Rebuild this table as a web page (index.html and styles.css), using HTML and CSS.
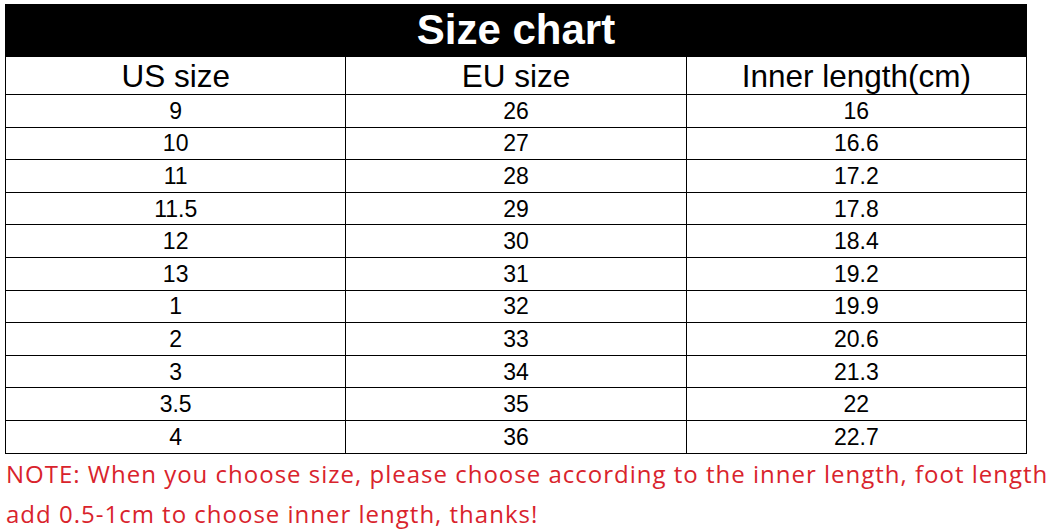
FILE: index.html
```html
<!DOCTYPE html>
<html lang="en">
<head>
<meta charset="utf-8">
<title>Size chart</title>
<link rel="stylesheet" href="styles.css">
</head>
<body>
<div class="chart">
  <div class="chart-title">Size chart</div>
  <table class="size-table">
    <thead>
      <tr><th>US size</th><th>EU size</th><th>Inner length(cm)</th></tr>
    </thead>
    <tbody>
      <tr><td>9</td><td>26</td><td>16</td></tr>
      <tr><td>10</td><td>27</td><td>16.6</td></tr>
      <tr><td>11</td><td>28</td><td>17.2</td></tr>
      <tr><td>11.5</td><td>29</td><td>17.8</td></tr>
      <tr><td>12</td><td>30</td><td>18.4</td></tr>
      <tr><td>13</td><td>31</td><td>19.2</td></tr>
      <tr><td>1</td><td>32</td><td>19.9</td></tr>
      <tr><td>2</td><td>33</td><td>20.6</td></tr>
      <tr><td>3</td><td>34</td><td>21.3</td></tr>
      <tr><td>3.5</td><td>35</td><td>22</td></tr>
      <tr><td>4</td><td>36</td><td>22.7</td></tr>
    </tbody>
  </table>
</div>
<p class="note">NOTE: When you choose size, please choose according to the inner length, foot length<br>add 0.5-1cm to choose inner length, thanks!</p>
</body>
</html>
```

FILE: styles.css
```css
html, body {
  margin: 0;
  padding: 0;
  background: #fff;
}

.chart {
  margin: 4px 0 0 5px;
  width: 1022px;
}

.chart-title {
  height: 52px;
  background: #000;
  color: #fff;
  font-family: "Liberation Sans", Arial, sans-serif;
  font-weight: bold;
  font-size: 42px;
  line-height: 52px;
  text-align: center;
}

.size-table {
  width: 100%;
  border-collapse: collapse;
  table-layout: fixed;
  font-family: "Liberation Sans", Arial, sans-serif;
  color: #000;
}

.size-table th,
.size-table td {
  border: 1px solid #000;
  padding: 0;
  text-align: center;
  vertical-align: middle;
}

.size-table th {
  height: 37px;
  font-weight: normal;
  font-size: 31.5px;
  line-height: 32px;
}

.size-table td {
  height: 31.6px;
  font-size: 23px;
  line-height: 26px;
}

.note {
  margin: 0;
  padding-left: 6px;
  font-family: "Open Sans", "Noto Sans", sans-serif;
  font-size: 24px;
  line-height: 40px;
  letter-spacing: 1px;
  color: #d9232c;
  white-space: nowrap;
}
```
